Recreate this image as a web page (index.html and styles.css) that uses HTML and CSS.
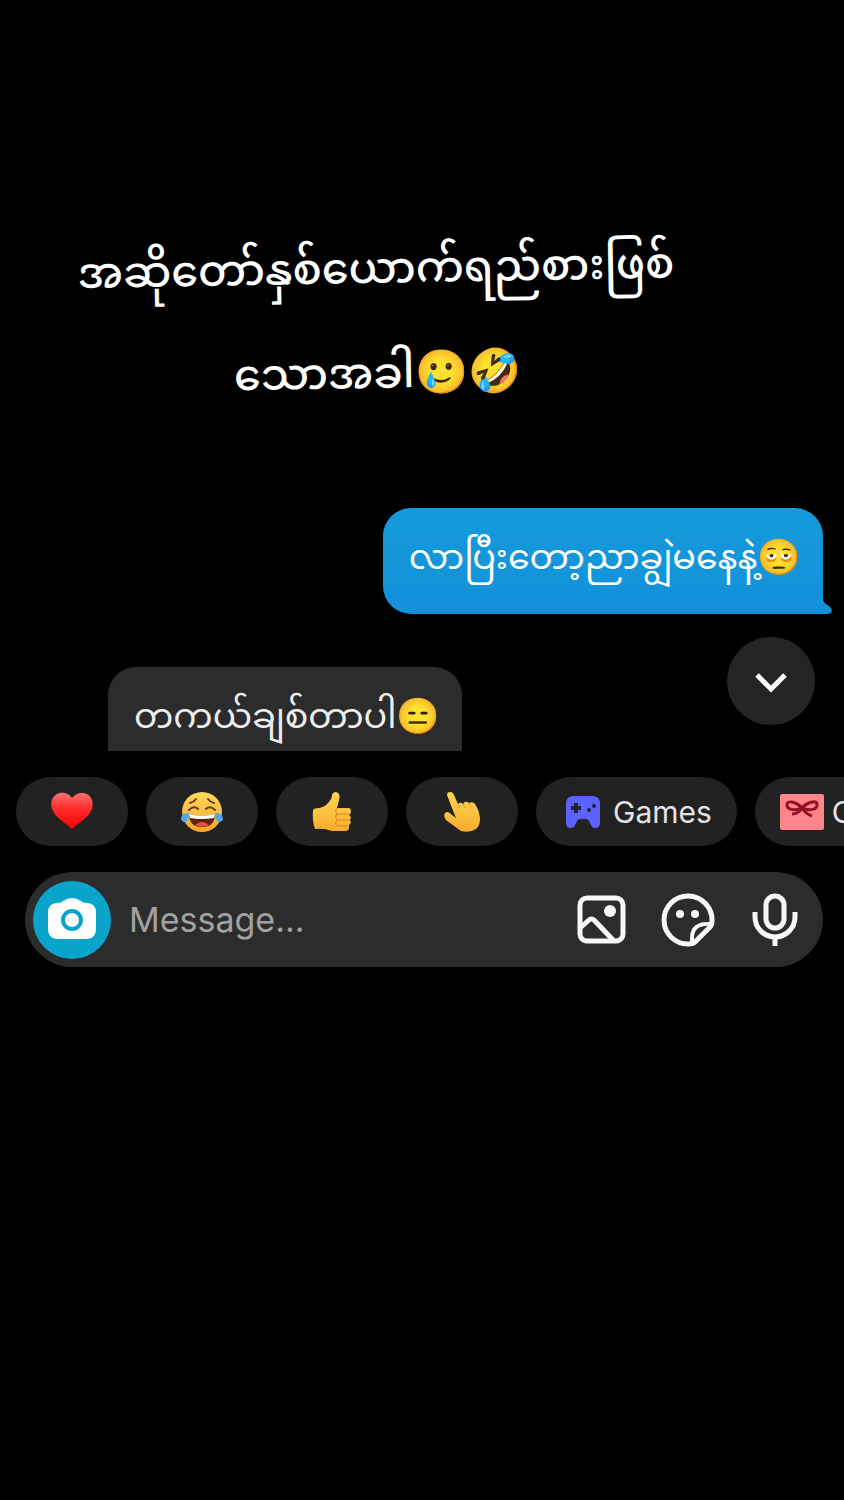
FILE: index.html
```html
<!DOCTYPE html>
<html lang="my">
<head>
  <meta charset="UTF-8">
  <meta name="viewport" content="width=device-width, initial-scale=1.0">
  <title>Chat</title>
  <link rel="stylesheet" href="styles.css">
</head>
<body>

<h1 class="caption">အဆိုတော်နှစ်ယောက်ရည်စားဖြစ်<br>သောအခါ🥲🤣</h1>

<main class="chat">
  <div class="messages">
    <div class="bubble sent">
      <p>လာပြီးတော့ညာချွဲမနေနဲ့🫩</p>
      <svg class="tail" viewBox="0 0 10 18" aria-hidden="true"><path d="M0 0V4C1 8 6 9 8 12C10 15 8 18 4 18H0Z"/></svg>
    </div>
    <div class="bubble received">
      <p>တကယ်ချစ်တာပါ😑</p>
    </div>
    <button class="scroll-down" aria-label="Scroll to latest">
      <svg viewBox="0 0 88 88"><path d="M30 38L44 52L58 38"/></svg>
    </button>
  </div>

  <div class="chips">
    <button class="chip" aria-label="Heart">
      <svg viewBox="0 0 44 44">
        <defs>
          <linearGradient id="heart" x1="0" y1="0" x2="0" y2="1">
            <stop offset="0" stop-color="#ff7272"/>
            <stop offset="0.45" stop-color="#ff2a2a"/>
            <stop offset="1" stop-color="#f50000"/>
          </linearGradient>
        </defs>
        <path fill="url(#heart)" d="M22 8C18 2 11 2 7 4C2 7 0 13 2 19C5 27 14 32 22 39C30 32 39 27 42 19C44 13 42 7 37 4C32 2 26 3 22 8Z"/>
      </svg>
    </button>
    <button class="chip" aria-label="Tears of joy">
      <svg viewBox="0 0 44 44">
        <defs>
          <linearGradient id="face" x1="0" y1="0" x2="0" y2="1">
            <stop offset="0" stop-color="#ffda59"/>
            <stop offset="1" stop-color="#f6a52c"/>
          </linearGradient>
        </defs>
        <circle cx="22" cy="22" r="20" fill="url(#face)"/>
        <g fill="none" stroke="#6b3c09" stroke-width="2" stroke-linecap="round">
          <path d="M10 13Q14 12 16 9M34 13Q30 12 28 9"/>
          <path d="M9 20Q14 15 18 19M35 20Q30 15 26 19"/>
        </g>
        <path fill="#5b250d" d="M9 24Q22 27 35 24Q35 37 22 37Q9 37 9 24Z"/>
        <path fill="#fff" d="M9 24Q22 27 35 24L34 28Q22 30 10 28Z"/>
        <path fill="#e84e45" d="M15 35Q22 29 29 35Q22 38 15 35Z"/>
        <path fill="#4fa8ed" d="M9 23Q2 23 1 28Q1 32 5 32Q9 31 9 23ZM35 23Q42 23 43 28Q43 32 39 32Q35 31 35 23Z"/>
      </svg>
    </button>
    <button class="chip" aria-label="Thumbs up">
      <svg viewBox="0 0 44 44">
        <defs>
          <linearGradient id="hand" x1="0" y1="0" x2="0" y2="1">
            <stop offset="0" stop-color="#ffd653"/>
            <stop offset="1" stop-color="#f9ad2d"/>
          </linearGradient>
        </defs>
        <path fill="url(#hand)" d="M3 20Q4 18 9 18Q15 17 18 13Q22 9 22 5Q23 2 26 2Q31 3 29 10L27 18H38Q41 18 41 21Q41 24 39 25Q42 27 40 30Q42 33 39 35Q40 41 35 41H22Q14 38 5 39Q2 31 3 20Z"/>
        <path fill="none" stroke="#d98419" stroke-width="1" d="M27 18Q24 21 27 24H39M27 24Q24 27 27 30H40M27 30Q24 34 28 36H38"/>
      </svg>
    </button>
    <button class="chip" aria-label="Pointing up">
      <svg viewBox="0 0 44 44">
        <path fill="url(#hand)" d="M7 5Q7 2 10 2Q13 2 14 5L18 14Q20 11 23 14Q25 10 29 13Q33 11 35 14Q39 20 40 28Q40 36 36 39Q30 43 21 41Q14 36 6 30Q3 26 5 23Q8 20 12 25L16 28L12 18Z"/>
        <path fill="none" stroke="#e09624" stroke-width="1" d="M18 14L20 18M23 14L25 18M29 13L31 17"/>
      </svg>
    </button>
    <button class="chip wide">
      <svg viewBox="0 0 44 44" aria-hidden="true">
        <path fill="#5b62ff" d="M13 6H31Q39 6 39 14V33Q39 38 34 38Q31 38 30 35L28 31Q27 29 25 29H19Q17 29 16 31L14 35Q13 38 10 38Q5 38 5 33V14Q5 6 13 6Z"/>
        <path fill="#20222f" d="M13 13H17V16H20V20H17V23H13V20H10V16H13Z"/>
        <circle fill="#20222f" cx="33" cy="16" r="2"/>
        <circle fill="#20222f" cx="28" cy="20" r="2"/>
      </svg>
      <span>Games</span>
    </button>
    <button class="chip wide">
      <svg viewBox="0 0 44 44" aria-hidden="true">
        <rect fill="#ff858b" y="4" width="44" height="36" rx="2"/>
        <path fill="none" stroke="#950f25" stroke-width="3" stroke-linejoin="round" d="M22 18C17 12 8 10 7 14C6 20 15 21 22 18C27 12 36 10 37 14C38 20 29 21 22 18Z"/>
        <path fill="none" stroke="#950f25" stroke-width="3" d="M22 18Q18 24 12 24M22 18Q26 24 32 26"/>
      </svg>
      <span>Cards</span>
    </button>
  </div>

  <form class="composer">
    <button type="button" class="camera" aria-label="Camera">
      <svg viewBox="0 0 78 78">
        <path fill="#fff" d="M30 20Q39 14 48 20Q50 22 54 22Q63 22 63 32V47Q63 58 53 58H25Q15 58 15 47V32Q15 22 24 22Q28 22 30 20Z"/>
        <circle cx="39" cy="39" r="9" fill="none" stroke="#08a4cc" stroke-width="4"/>
      </svg>
    </button>
    <input type="text" class="message-input" placeholder="Message..." aria-label="Message">
    <button type="button" class="tool" aria-label="Photo">
      <svg viewBox="0 0 52 52">
        <rect x="5" y="4" width="43" height="43" rx="7"/>
        <path d="M5 34L14 26Q16 24 19 26L39 47"/>
        <circle class="solid" cx="35" cy="17" r="6"/>
      </svg>
    </button>
    <button type="button" class="tool" aria-label="Stickers">
      <svg viewBox="0 0 52 52">
        <path d="M50 27A24 24 0 1 0 27 50Q31 50 33 48L48 33Q50 31 50 27Z"/>
        <path class="peel" d="M30 49V44C30 34 36 29 49 30"/>
        <circle class="solid" cx="18" cy="20" r="4"/>
        <circle class="solid" cx="33" cy="20" r="4"/>
      </svg>
    </button>
    <button type="button" class="tool" aria-label="Voice message">
      <svg viewBox="0 0 52 52">
        <rect x="17" y="2" width="18" height="32" rx="9"/>
        <path d="M6 18V23A20 20 0 0 0 46 23V18M26 43V52"/>
      </svg>
    </button>
  </form>
</main>

</body>
</html>
```
FILE: styles.css
```css
* {
  box-sizing: border-box;
}

body {
  margin: 0;
  background: #000;
  color: #fff;
  font-family: Inter, "Noto Sans", "Noto Sans Myanmar", "Noto Color Emoji", sans-serif;
  overflow-x: hidden;
}

button {
  border: none;
  padding: 0;
  color: inherit;
  font-family: inherit;
  cursor: pointer;
}

.caption {
  margin: 0;
  padding: 214px 94px 0 0;
  font-size: 43px;
  font-weight: 500;
  line-height: 105px;
  text-align: center;
  transform: rotate(-1deg);
}

.chat {
  padding-top: 84px;
}

.messages {
  position: relative;
  display: flex;
  flex-direction: column;
  padding: 0 21px 0 108px;
}

.bubble {
  background: #2c2c2c;
  font-size: 35px;
  line-height: 52px;
  padding: 22px 22px 0 26px;
}

.bubble p {
  margin: 0;
  white-space: nowrap;
}

.sent {
  position: relative;
  align-self: flex-end;
  height: 106px;
  background: linear-gradient(#149bdc, #1490d8);
  border-radius: 28px 28px 0 28px;
}

.tail {
  position: absolute;
  left: 100%;
  bottom: 0;
  width: 10px;
  height: 18px;
  fill: #1490d8;
}

.received {
  align-self: flex-start;
  height: 84px;
  margin-top: 53px;
  overflow: hidden;
  color: #eee;
  border-radius: 28px 28px 0 0;
}

.scroll-down {
  position: absolute;
  right: 29px;
  bottom: 26px;
  width: 88px;
  height: 88px;
  background: #252525;
  border-radius: 50%;
}

.scroll-down svg {
  display: block;
  fill: none;
  stroke: #fff;
  stroke-width: 5;
}

.chips {
  display: flex;
  gap: 18px;
  padding: 26px 0 26px 16px;
  overflow: hidden;
}

.chip {
  flex: none;
  display: flex;
  align-items: center;
  justify-content: center;
  gap: 8px;
  width: 112px;
  height: 69px;
  background: #222;
  border-radius: 35px;
}

.chip.wide {
  width: auto;
  padding: 0 25px;
  color: #e4e4e4;
  font-size: 30px;
}

.chip svg {
  width: 44px;
  height: 44px;
}

.composer {
  display: flex;
  align-items: center;
  height: 95px;
  margin: 0 21px 0 25px;
  padding: 0 22px 0 8px;
  background: #2c2c2c;
  border-radius: 48px;
}

.camera {
  flex: none;
  width: 78px;
  height: 78px;
  background: #08a4cc;
  border-radius: 50%;
}

.camera svg,
.tool svg {
  display: block;
}

.message-input {
  flex: 1;
  min-width: 0;
  padding: 0 18px;
  border: none;
  outline: none;
  background: none;
  color: #fff;
  font-family: inherit;
  font-size: 34px;
}

.message-input::placeholder {
  color: #a2a2a2;
  opacity: 1;
}

.tool {
  flex: none;
  width: 52px;
  height: 52px;
  margin-left: 35px;
  background: none;
}

.tool svg {
  fill: none;
  stroke: #f7f7f7;
  stroke-width: 5;
  stroke-linejoin: round;
  overflow: visible;
}

.tool .peel {
  stroke-width: 4;
}

.tool .solid {
  fill: #f7f7f7;
  stroke: none;
}
```
